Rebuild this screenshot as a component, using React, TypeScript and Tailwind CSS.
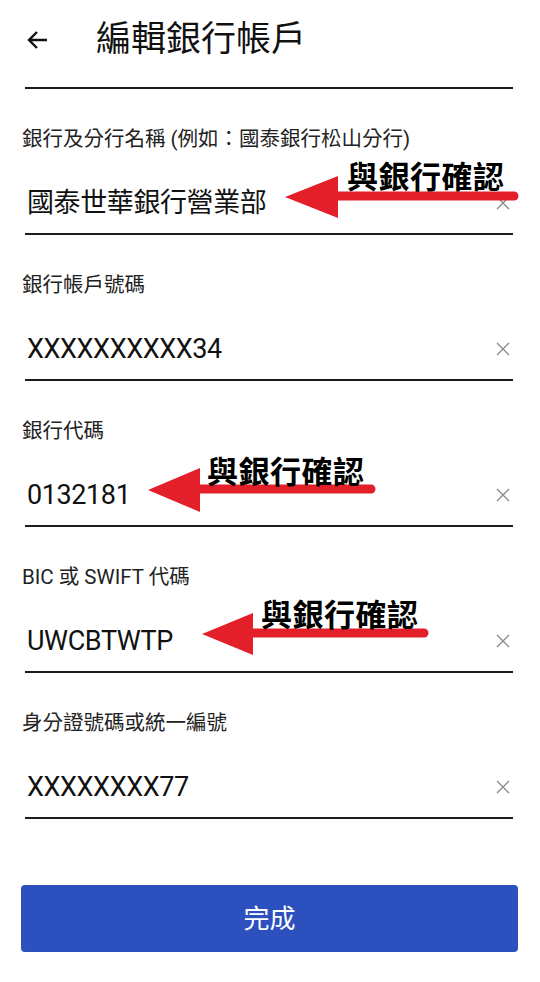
import React from "react";

const fields = [
  { label: "銀行及分行名稱 (例如：國泰銀行松山分行)", value: "國泰世華銀行營業部" },
  { label: "銀行帳戶號碼", value: "XXXXXXXXXX34" },
  { label: "銀行代碼", value: "0132181" },
  { label: "BIC 或 SWIFT 代碼", value: "UWCBTWTP" },
  { label: "身分證號碼或統一編號", value: "XXXXXXXX77" },
];

const font = { fontFamily: 'Roboto, "Noto Sans CJK TC", sans-serif' };

function ClearIcon() {
  return (
    <svg width="14" height="14" viewBox="0 0 14 14" className="shrink-0">
      <path d="M1 1 L13 13 M13 1 L1 13" stroke="#8a8a8a" strokeWidth="1.4" fill="none" />
    </svg>
  );
}

function Arrow({ tipX, tipY, backX, halfH, endX }: { tipX: number; tipY: number; backX: number; halfH: number; endX: number }) {
  return (
    <>
      <line x1={backX - 6} y1={tipY - 1} x2={endX} y2={tipY - 1} stroke="#e3202a" strokeWidth="9" strokeLinecap="round" />
      <polygon points={`${tipX},${tipY} ${backX},${tipY - halfH} ${backX},${tipY + halfH}`} fill="#e3202a" />
    </>
  );
}

export default function App() {
  return (
    <div className="relative w-[540px] h-[982px] bg-white overflow-hidden" style={font}>
      <div className="pl-[25px] pr-[27px]">
        <div className="h-[89px] flex items-center border-b-2 border-[#1c1c1c] pb-[8px]">
          <svg width="22" height="20" viewBox="0 0 22 20" className="ml-[2px]">
            <path d="M20 10 H3 M10 2 L2 10 L10 18" stroke="#111" strokeWidth="2.4" fill="none" strokeLinejoin="miter" />
          </svg>
          <div className="ml-[47px] text-[35px] leading-none text-[#111]">編輯銀行帳戶</div>
        </div>
        {fields.map((f) => (
          <div key={f.label}>
            <div className="mt-[36px] h-[28px] flex items-center -ml-[3px] text-[20.5px] leading-none text-[#222]">{f.label}</div>
            <div className="flex items-center justify-between pt-[32px] pb-[12px] border-b-2 border-[#1c1c1c] pl-[2px] pr-[3px]">
              <div className="h-[36px] flex items-center text-[27px] leading-none tracking-[-0.4px] text-[#111]">{f.value}</div>
              <ClearIcon />
            </div>
          </div>
        ))}
      </div>
      <div className="pl-[21px] pr-[22px] mt-[66px]">
        <button className="w-full h-[67px] rounded-[4px] bg-[#2c50bd] text-white text-[26px] leading-none flex items-center justify-center">
          完成
        </button>
      </div>

      <svg className="absolute left-0 top-0 pointer-events-none" width="540" height="982">
        <Arrow tipX={285} tipY={197} backX={338} halfH={21} endX={514} />
        <Arrow tipX={148} tipY={490} backX={200} halfH={22} endX={371} />
        <Arrow tipX={202} tipY={634} backX={253} halfH={21} endX={424} />
      </svg>
      <div className="absolute left-[347px] top-[159px] text-[31px] leading-none font-bold tracking-[0.5px] text-black" style={{ fontFamily: '"Noto Sans CJK TC", sans-serif' }}>與銀行確認</div>
      <div className="absolute left-[207px] top-[454px] text-[31px] leading-none font-bold tracking-[0.5px] text-black" style={{ fontFamily: '"Noto Sans CJK TC", sans-serif' }}>與銀行確認</div>
      <div className="absolute left-[261px] top-[597px] text-[31px] leading-none font-bold tracking-[0.5px] text-black" style={{ fontFamily: '"Noto Sans CJK TC", sans-serif' }}>與銀行確認</div>
    </div>
  );
}
